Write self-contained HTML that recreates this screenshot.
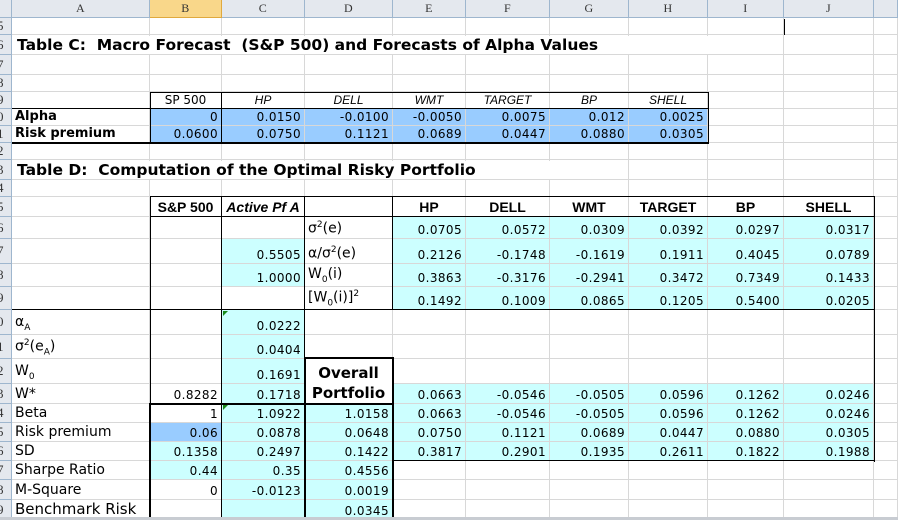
<!DOCTYPE html>
<html><head><meta charset="utf-8"><style>
body{margin:0;width:898px;height:520px;overflow:hidden;background:#fff;position:relative;font-family:"DejaVu Sans","Liberation Sans",sans-serif}
table{position:absolute;left:0;top:0;border-collapse:separate;border-spacing:0;table-layout:fixed}
td{box-sizing:border-box;border-right:1px solid #d8d8d8;border-bottom:1px solid #d8d8d8;padding:0 3px 1px 3px;vertical-align:bottom;white-space:nowrap;overflow:visible;font-size:12px;color:#000;text-align:right;letter-spacing:0.4px}
tr.h td{background:#e4e8ee;border-color:#9eb6ce;text-align:center;font-family:"Liberation Serif",serif;font-size:12px;color:#333;vertical-align:middle;padding:0}
td.rh{background:#e4e8ee;border-color:#9eb6ce;text-align:left;padding:0;font-family:"Liberation Serif",serif;font-size:13px;color:#333;overflow:hidden;text-indent:-3px;vertical-align:middle}
tr.h td.sel{background:#f9d78a;border-color:#e0a93e}
.c{background:#ccffff}.b{background:#99ccff}
.l{text-align:left;font-size:14px;letter-spacing:0}
.bl{text-align:left;font-weight:bold;font-size:13px;letter-spacing:0}
.ct{text-align:center;letter-spacing:0}
.i{font-style:italic;font-family:"Liberation Sans",sans-serif;font-size:12px}
.hd{text-align:center;font-weight:bold;font-family:"Liberation Sans",sans-serif;font-size:14px;letter-spacing:0}
.ov{text-align:center;font-weight:bold;font-size:15px;letter-spacing:0}
.k{position:absolute;background:#000}
.t{position:absolute;background:#fff;font-weight:bold;font-size:15.5px;white-space:nowrap;padding-left:5px;box-sizing:border-box}
sub,sup{font-size:9px}
</style></head><body>
<table>
<colgroup><col style="width:12px"><col style="width:138px"><col style="width:72px"><col style="width:83px"><col style="width:88px"><col style="width:73px"><col style="width:84px"><col style="width:79px"><col style="width:79px"><col style="width:76px"><col style="width:90px"><col style="width:24px"></colgroup>
<tr class="h" style="height:18px"><td></td><td>A</td><td class="sel">B</td><td>C</td><td>D</td><td>E</td><td>F</td><td>G</td><td>H</td><td>I</td><td>J</td><td></td></tr>
<tr style="height:17px"><td class="rh">5</td><td></td><td></td><td></td><td></td><td></td><td></td><td></td><td></td><td></td><td></td><td></td></tr>
<tr style="height:20px"><td class="rh">6</td><td></td><td></td><td></td><td></td><td></td><td></td><td></td><td></td><td></td><td></td><td></td></tr>
<tr style="height:20px"><td class="rh">7</td><td></td><td></td><td></td><td></td><td></td><td></td><td></td><td></td><td></td><td></td><td></td></tr>
<tr style="height:17px"><td class="rh">8</td><td></td><td></td><td></td><td></td><td></td><td></td><td></td><td></td><td></td><td></td><td></td></tr>
<tr style="height:17px"><td class="rh">9</td><td></td><td class="ct">SP 500</td><td class="ct i">HP</td><td class="ct i">DELL</td><td class="ct i">WMT</td><td class="ct i">TARGET</td><td class="ct i">BP</td><td class="ct i">SHELL</td><td></td><td></td><td></td></tr>
<tr style="height:17px"><td class="rh">0</td><td class="bl">Alpha</td><td class="b">0</td><td class="b">0.0150</td><td class="b">-0.0100</td><td class="b">-0.0050</td><td class="b">0.0075</td><td class="b">0.012</td><td class="b">0.0025</td><td></td><td></td><td></td></tr>
<tr style="height:17px"><td class="rh">1</td><td class="bl">Risk premium</td><td class="b">0.0600</td><td class="b">0.0750</td><td class="b">0.1121</td><td class="b">0.0689</td><td class="b">0.0447</td><td class="b">0.0880</td><td class="b">0.0305</td><td></td><td></td><td></td></tr>
<tr style="height:17px"><td class="rh">2</td><td></td><td></td><td></td><td></td><td></td><td></td><td></td><td></td><td></td><td></td><td></td></tr>
<tr style="height:20px"><td class="rh">3</td><td></td><td></td><td></td><td></td><td></td><td></td><td></td><td></td><td></td><td></td><td></td></tr>
<tr style="height:17px"><td class="rh">4</td><td></td><td></td><td></td><td></td><td></td><td></td><td></td><td></td><td></td><td></td><td></td></tr>
<tr style="height:20px"><td class="rh">5</td><td></td><td class="hd">S&amp;P 500</td><td class="hd" style="font-style:italic">Active Pf A</td><td></td><td class="hd">HP</td><td class="hd">DELL</td><td class="hd">WMT</td><td class="hd">TARGET</td><td class="hd">BP</td><td class="hd">SHELL</td><td></td></tr>
<tr style="height:22px"><td class="rh">6</td><td></td><td></td><td></td><td class="l">σ<sup>2</sup>(e)</td><td class="c">0.0705</td><td class="c">0.0572</td><td class="c">0.0309</td><td class="c">0.0392</td><td class="c">0.0297</td><td class="c">0.0317</td><td></td></tr>
<tr style="height:25px"><td class="rh">7</td><td></td><td></td><td class="c">0.5505</td><td class="l">α/σ<sup>2</sup>(e)</td><td class="c">0.2126</td><td class="c">-0.1748</td><td class="c">-0.1619</td><td class="c">0.1911</td><td class="c">0.4045</td><td class="c">0.0789</td><td></td></tr>
<tr style="height:23px"><td class="rh">8</td><td></td><td></td><td class="c">1.0000</td><td class="l">W<sub>0</sub>(i)</td><td class="c">0.3863</td><td class="c">-0.3176</td><td class="c">-0.2941</td><td class="c">0.3472</td><td class="c">0.7349</td><td class="c">0.1433</td><td></td></tr>
<tr style="height:23px"><td class="rh">9</td><td></td><td></td><td></td><td class="l">[W<sub>0</sub>(i)]<sup>2</sup></td><td class="c">0.1492</td><td class="c">0.1009</td><td class="c">0.0865</td><td class="c">0.1205</td><td class="c">0.5400</td><td class="c">0.0205</td><td></td></tr>
<tr style="height:25px"><td class="rh">0</td><td class="l">α<sub>A</sub></td><td></td><td class="c">0.0222</td><td></td><td></td><td></td><td></td><td></td><td></td><td></td><td></td></tr>
<tr style="height:24px"><td class="rh">1</td><td class="l">σ<sup>2</sup>(e<sub>A</sub>)</td><td></td><td class="c">0.0404</td><td></td><td></td><td></td><td></td><td></td><td></td><td></td><td></td></tr>
<tr style="height:25px"><td class="rh">2</td><td class="l">W<sub>0</sub></td><td></td><td class="c">0.1691</td><td class="ov" style="border-bottom-color:#fff">Overall</td><td></td><td></td><td></td><td></td><td></td><td></td><td></td></tr>
<tr style="height:20px"><td class="rh">3</td><td class="l">W*</td><td>0.8282</td><td class="c">0.1718</td><td class="ov">Portfolio</td><td class="c">0.0663</td><td class="c">-0.0546</td><td class="c">-0.0505</td><td class="c">0.0596</td><td class="c">0.1262</td><td class="c">0.0246</td><td></td></tr>
<tr style="height:19px"><td class="rh">4</td><td class="l">Beta</td><td>1</td><td class="c">1.0922</td><td class="c">1.0158</td><td class="c">0.0663</td><td class="c">-0.0546</td><td class="c">-0.0505</td><td class="c">0.0596</td><td class="c">0.1262</td><td class="c">0.0246</td><td></td></tr>
<tr style="height:19px"><td class="rh">5</td><td class="l">Risk premium</td><td class="b">0.06</td><td class="c">0.0878</td><td class="c">0.0648</td><td class="c">0.0750</td><td class="c">0.1121</td><td class="c">0.0689</td><td class="c">0.0447</td><td class="c">0.0880</td><td class="c">0.0305</td><td></td></tr>
<tr style="height:19px"><td class="rh">6</td><td class="l">SD</td><td class="c">0.1358</td><td class="c">0.2497</td><td class="c">0.1422</td><td class="c">0.3817</td><td class="c">0.2901</td><td class="c">0.1935</td><td class="c">0.2611</td><td class="c">0.1822</td><td class="c">0.1988</td><td></td></tr>
<tr style="height:19px"><td class="rh">7</td><td class="l">Sharpe Ratio</td><td class="c">0.44</td><td class="c">0.35</td><td class="c">0.4556</td><td></td><td></td><td></td><td></td><td></td><td></td><td></td></tr>
<tr style="height:20px"><td class="rh">8</td><td class="l">M-Square</td><td>0</td><td class="c">-0.0123</td><td class="c">0.0019</td><td></td><td></td><td></td><td></td><td></td><td></td><td></td></tr>
<tr style="height:17px"><td class="rh">9</td><td class="l" style="font-size:15px">Benchmark Risk</td><td></td><td class="c"></td><td class="c">0.0345</td><td></td><td></td><td></td><td></td><td></td><td></td><td></td></tr>
</table>
<div style="position:absolute;left:0;top:517px;width:898px;height:3px;background:#c8ccd2"></div>
<div class="t" style="left:12px;top:36px;width:696px;height:18px;line-height:18px">Table C:&nbsp; Macro Forecast&nbsp; (S&amp;P 500) and Forecasts of Alpha Values</div>
<div class="t" style="left:12px;top:161px;width:538px;height:18px;line-height:18px">Table D:&nbsp; Computation of the Optimal Risky Portfolio</div>
<div class="k" style="left:150px;top:92px;width:559px;height:1px"></div>
<div class="k" style="left:12px;top:108px;width:697px;height:1px"></div>
<div class="k" style="left:12px;top:142px;width:697px;height:2px"></div>
<div class="k" style="left:150px;top:92px;width:1px;height:51px"></div>
<div class="k" style="left:221px;top:92px;width:1px;height:51px"></div>
<div class="k" style="left:708px;top:92px;width:1px;height:51px"></div>
<div class="k" style="left:784px;top:19px;width:1px;height:16px"></div>
<div class="k" style="left:150px;top:196px;width:725px;height:1px"></div>
<div class="k" style="left:150px;top:216px;width:725px;height:1px"></div>
<div class="k" style="left:874px;top:196px;width:1px;height:266px"></div>
<div class="k" style="left:12px;top:309px;width:863px;height:1px"></div>
<div class="k" style="left:150px;top:196px;width:1px;height:210px"></div>
<div class="k" style="left:221px;top:196px;width:1px;height:321px"></div>
<div class="k" style="left:304px;top:196px;width:1px;height:162px"></div>
<div class="k" style="left:392px;top:196px;width:1px;height:114px"></div>
<div class="k" style="left:304px;top:357px;width:90px;height:2px"></div>
<div class="k" style="left:304px;top:357px;width:2px;height:160px"></div>
<div class="k" style="left:392px;top:357px;width:2px;height:160px"></div>
<div class="k" style="left:149px;top:403px;width:245px;height:2px"></div>
<div class="k" style="left:149px;top:403px;width:2px;height:114px"></div>
<div class="k" style="left:393px;top:460px;width:482px;height:1px"></div>
<div style="position:absolute;left:223px;top:311px;width:0;height:0;border-top:5px solid #1a8a1a;border-right:5px solid transparent"></div>
<div style="position:absolute;left:223px;top:405px;width:0;height:0;border-top:5px solid #1a8a1a;border-right:5px solid transparent"></div>
</body></html>
